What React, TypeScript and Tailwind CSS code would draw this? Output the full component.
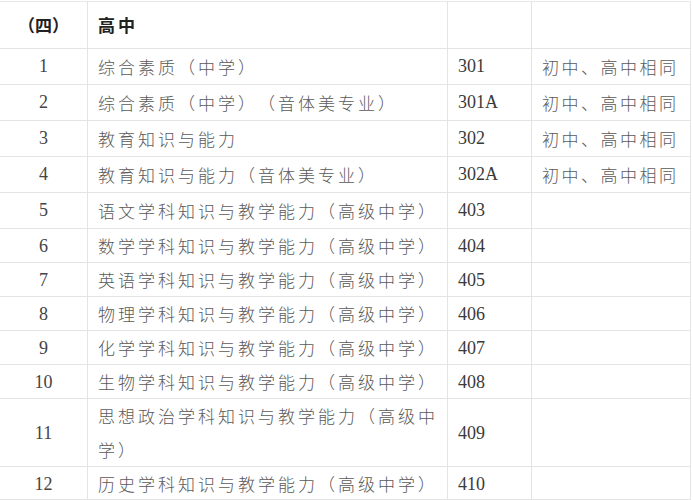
import React from "react";

const cjk = "font-['Noto_Sans_CJK_SC','Noto_Sans_CJK_JP',sans-serif] [text-spacing-trim:space-all]";
const serif = "font-['Liberation_Serif','Noto_Sans_CJK_SC',serif]";

type Row = { n: string; name: string; code: string; note: string; h: string };

const rows: Row[] = [
  { n: "1", name: "综合素质（中学）", code: "301", note: "初中、高中相同", h: "h-[36px]" },
  { n: "2", name: "综合素质（中学）（音体美专业）", code: "301A", note: "初中、高中相同", h: "h-[36px]" },
  { n: "3", name: "教育知识与能力", code: "302", note: "初中、高中相同", h: "h-[36px]" },
  { n: "4", name: "教育知识与能力（音体美专业）", code: "302A", note: "初中、高中相同", h: "h-[36px]" },
  { n: "5", name: "语文学科知识与教学能力（高级中学）", code: "403", note: "", h: "h-[36px]" },
  { n: "6", name: "数学学科知识与教学能力（高级中学）", code: "404", note: "", h: "h-[34px]" },
  { n: "7", name: "英语学科知识与教学能力（高级中学）", code: "405", note: "", h: "h-[34px]" },
  { n: "8", name: "物理学科知识与教学能力（高级中学）", code: "406", note: "", h: "h-[34px]" },
  { n: "9", name: "化学学科知识与教学能力（高级中学）", code: "407", note: "", h: "h-[34px]" },
  { n: "10", name: "生物学科知识与教学能力（高级中学）", code: "408", note: "", h: "h-[34px]" },
  { n: "11", name: "思想政治学科知识与教学能力（高级中学）", code: "409", note: "", h: "h-[68px]" },
  { n: "12", name: "历史学科知识与教学能力（高级中学）", code: "410", note: "", h: "h-[33px]" },
];

const grid = "grid grid-cols-[87px_360px_84px_160px] w-[691px] border-b border-[#e4e4e4]";

export default function App() {
  return (
    <div className="w-[693px] h-[500px] bg-white overflow-hidden">
      <div className="mt-px border-t border-[#e8e8e8] w-[691px]">
        <div className={`${grid} h-[47px]`}>
          <div className={`flex items-center justify-center text-[17px] font-bold text-[#222] ${cjk}`}>（四）</div>
          <div className={`flex items-center pl-[10px] border-l border-[#e4e4e4] text-[17px] font-bold text-[#222] tracking-[3px] ${cjk}`}>高中</div>
          <div className="border-l border-[#e4e4e4]"></div>
          <div className="border-l border-r border-[#e4e4e4]"></div>
        </div>
        {rows.map((r) => (
          <div key={r.n} className={`${grid} ${r.h}`}>
            <div className={`flex items-center justify-center text-[18px] text-[#444] ${serif}`}>{r.n}</div>
            <div className={`flex items-center pl-[10px] pr-[4px] border-l border-[#e4e4e4] text-[17px] leading-[34px] tracking-[3px] text-[#5a5a5a] font-light ${cjk}`}>
              <span>{r.name}</span>
            </div>
            <div className={`flex items-center pl-[10px] border-l border-[#e4e4e4] text-[18px] text-[#3a3a3a] ${serif}`}>{r.code}</div>
            <div className={`flex items-center pl-[10px] border-l border-r border-[#e4e4e4] text-[17px] tracking-[2.5px] text-[#5a5a5a] font-light whitespace-nowrap ${cjk}`}>{r.note}</div>
          </div>
        ))}
      </div>
    </div>
  );
}
